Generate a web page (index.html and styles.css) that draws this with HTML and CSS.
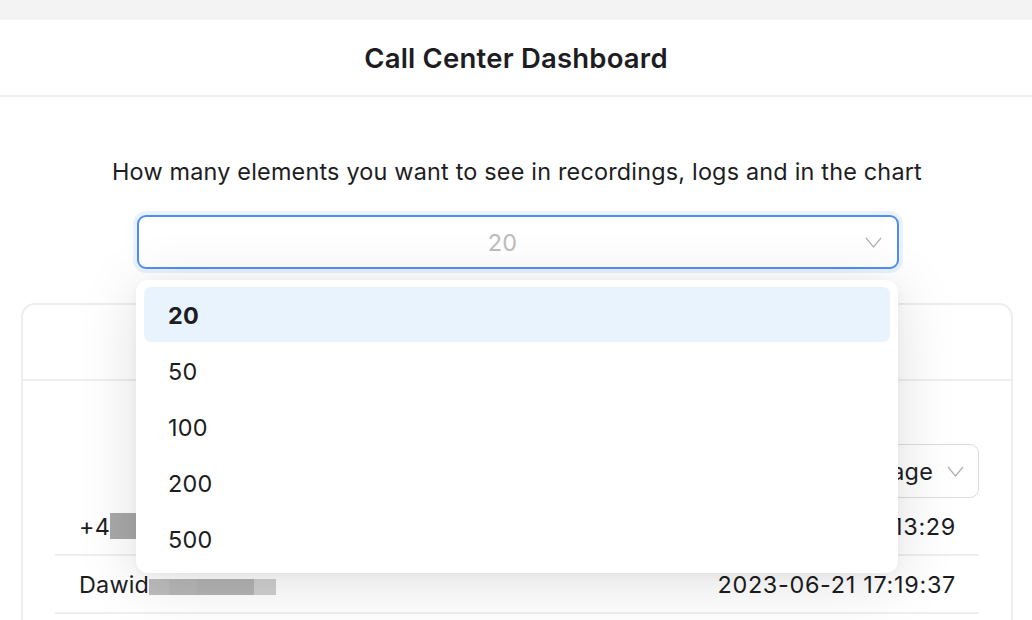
FILE: index.html
```html
<!DOCTYPE html>
<html lang="en">
<head>
  <meta charset="UTF-8" />
  <meta name="viewport" content="width=device-width, initial-scale=1.0"/>
  <title>Call Center Dashboard</title>
  <link rel="stylesheet" href="styles.css">
</head>
<body>
  <div class="top-strip"></div>
  <header class="app-header">
    <h1>Call Center Dashboard</h1>
  </header>

  <main class="content">
    <p class="limit-label">How many elements you want to see in recordings, logs and in the chart</p>

    <div class="limit-select">
      <div class="select-box focused">
        <span class="select-value">20</span>
        <svg class="chevron" width="17" height="11" viewBox="0 0 17 11"><path d="M1 1l7.5 9 7.5-9" fill="none" stroke="#b3b3b3" stroke-width="1.3"/></svg>
      </div>

      <!-- lista deschisa -->
      <ul class="dropdown">
        <li class="option active">20</li>
        <li class="option">50</li>
        <li class="option">100</li>
        <li class="option">200</li>
        <li class="option">500</li>
      </ul>
    </div>

    <section class="card">
      <div class="card-head"></div>
      <div class="card-body">
        <div class="card-tools">
          <div class="small-select">
            <span>Select page</span>
            <svg class="chevron" width="17" height="11" viewBox="0 0 17 11"><path d="M1 1l7.5 9 7.5-9" fill="none" stroke="#b3b3b3" stroke-width="1.3"/></svg>
          </div>
        </div>
        <div class="log-row">
          <span class="caller">+4<span class="redact r1"></span></span>
          <span class="time">2023-06-21 17:13:29</span>
        </div>
        <div class="log-row">
          <span class="caller">Dawid<span class="redact r2"></span><span class="redact r3"></span><span class="redact r4"></span><span class="redact r5"></span></span>
          <span class="time">2023-06-21 17:19:37</span>
        </div>
        <div class="log-row"></div>
      </div>
    </section>
  </main>
</body>
</html>
```

FILE: styles.css
```css
* {
  box-sizing: border-box;
}

body {
  margin: 0;
  background: #fff;
  color: #1d1d1f;
  font-family: Inter, 'Noto Sans', sans-serif;
  letter-spacing: 0.2px;
  overflow: hidden;
}

.top-strip {
  height: 20px;
  background: #f3f3f3;
}

.app-header {
  height: 77px;
  display: flex;
  align-items: center;
  justify-content: center;
  border-bottom: 2px solid #efefef;
}

.app-header h1 {
  margin: 0;
  font-size: 27.5px;
  font-weight: 600;
  color: #1d1d1f;
}

.content {
  padding: 0 19px 0 21px;
  display: flex;
  flex-direction: column;
  align-items: center;
}

.limit-label {
  margin: 60px 0 0;
  font-size: 23.4px;
  line-height: 30px;
  color: #1d1d1f;
}

/* select-ul de sus */
.limit-select {
  position: relative;
  width: 762px;
  margin-top: 28px;
  margin-left: 2px;
}

.select-box {
  height: 54px;
  border: 1.5px solid #d9d9d9;
  border-radius: 9px;
  display: flex;
  align-items: center;
  justify-content: center;
  position: relative;
  background: #fff;
}

.select-box.focused {
  border: 2px solid #4f8ff5;
  box-shadow: 0 0 0 4px #eaf2fd;
}

.select-value {
  font-size: 23.4px;
  color: #bdbdbd;
  margin-left: -31px;
}

.select-box .chevron {
  position: absolute;
  right: 15px;
  top: 20px;
}

.dropdown {
  position: absolute;
  top: 65px;
  left: -1px;
  width: 762px;
  margin: 0;
  padding: 7px 8px;
  list-style: none;
  background: #fff;
  border-radius: 12px;
  box-shadow: 0 8px 60px rgba(0, 0, 0, 0.13), 0 2px 8px rgba(0, 0, 0, 0.04);
  z-index: 10;
}

.option {
  height: 56px;
  display: flex;
  align-items: center;
  padding-left: 24px;
  padding-top: 2px;
  font-size: 23.4px;
  color: #1d1d1f;
  border-radius: 7px;
}

.option.active {
  background: #e9f3fe;
  font-weight: 700;
  height: 55px;
}

/* cardul din spate */
.card {
  width: 992px;
  margin-top: 34px;
  border: 2px solid #eeeeee;
  border-radius: 14px;
  align-self: flex-start;
}

.card-head {
  height: 76px;
  border-bottom: 2px solid #eeeeee;
}

.card-body {
  padding: 63px 32px 0 32px;
}

.card-tools {
  display: flex;
  justify-content: flex-end;
}

.small-select {
  height: 54px;
  width: 240px;
  border: 1.5px solid #dcdcdc;
  border-radius: 9px;
  display: flex;
  align-items: center;
  justify-content: flex-end;
  gap: 14px;
  padding-right: 14px;
  font-size: 23.4px;
  color: #1d1d1f;
}

.log-row {
  height: 58px;
  display: flex;
  align-items: center;
  justify-content: space-between;
  padding: 0 24px;
  border-bottom: 2px solid #eeeeee;
  font-size: 23.4px;
  color: #1d1d1f;
}

.log-row:first-of-type {
  height: 59px;
}

.time {
  letter-spacing: 0.7px;
  margin-right: -1px;
}

.caller {
  display: flex;
  align-items: center;
}

.redact {
  display: inline-block;
  height: 16px;
  background: #b1b1b1;
}

.r1 { width: 26px; height: 26px; background: #a8a8a8; }
.r2 { width: 20px; background: #bdbdbd; margin-top: 6px; }
.r3 { width: 28px; background: #b7b7b7; margin-top: 6px; }
.r4 { width: 57px; background: #b3b3b3; margin-top: 6px; }
.r5 { width: 22px; background: #cfcfcf; margin-top: 6px; }
```
